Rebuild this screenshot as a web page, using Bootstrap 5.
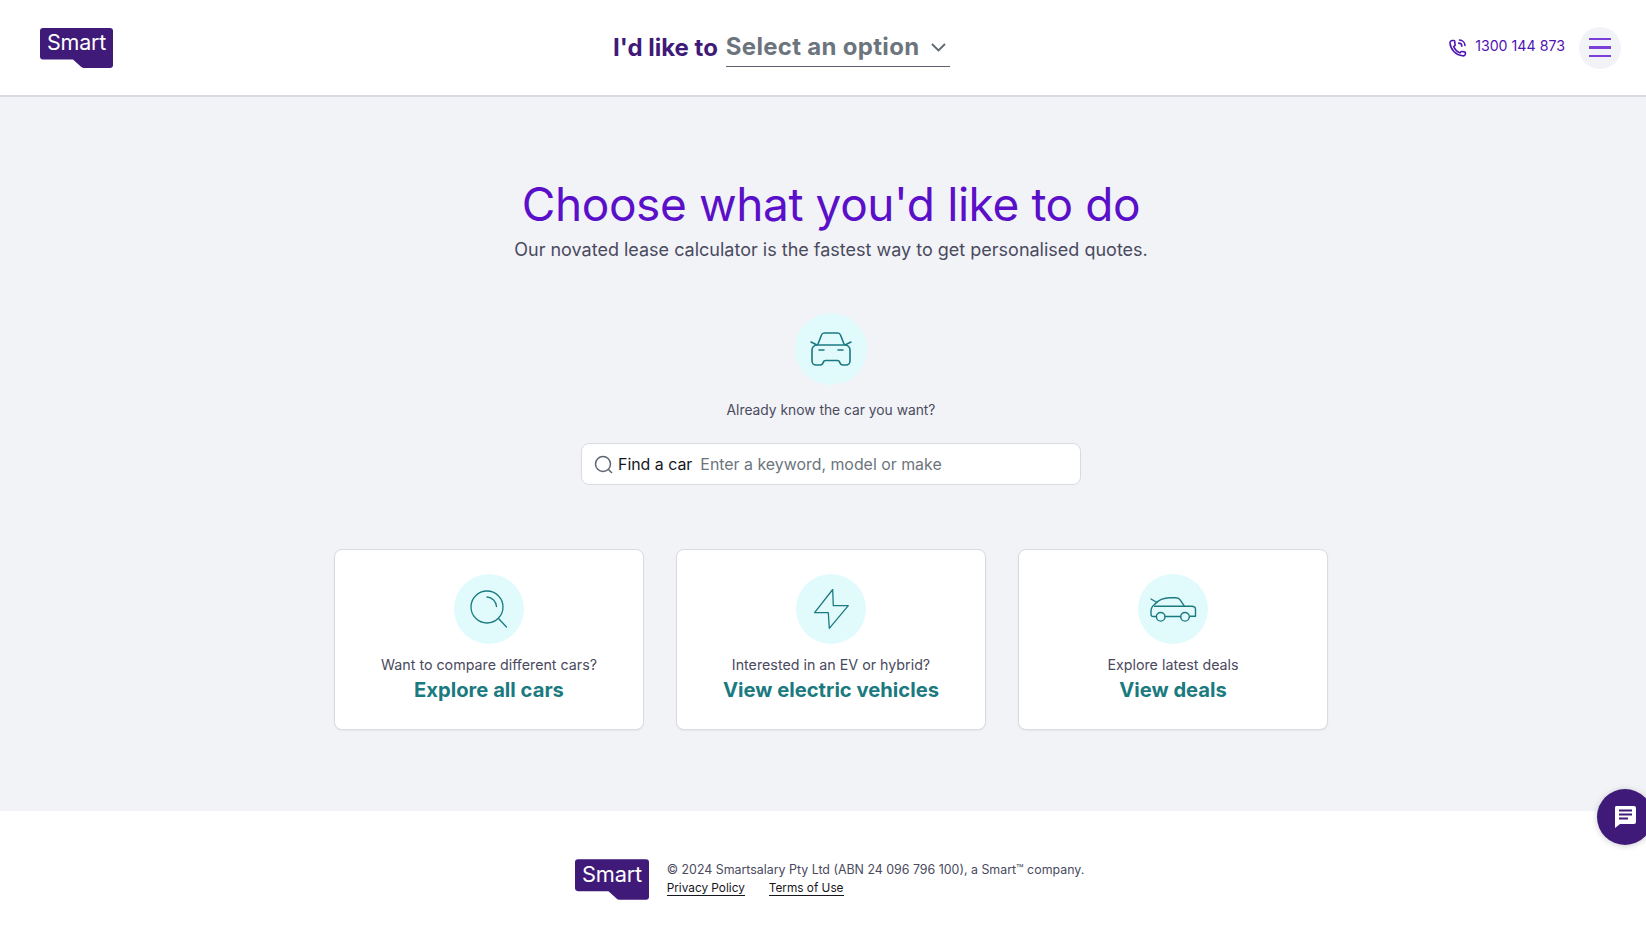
<!DOCTYPE html>
<html lang="en">
<head>
  <meta charset="UTF-8" />
  <meta name="viewport" content="width=device-width, initial-scale=1" />
  <title>Choose what you'd like to do</title>
  <link href="https://cdn.jsdelivr.net/npm/bootstrap@5.3.3/dist/css/bootstrap.min.css" rel="stylesheet" />
  <style>
    body {
      font-family: Inter, "Liberation Sans", sans-serif;
      color: #4a4a5e;
      background: #fff;
      overflow-x: hidden;
    }
    .topbar {
      height: 97px;
      padding: 0 25px 0 40px;
      background: #fff;
      border-bottom: 2px solid #d9dae2;
    }
    .topbar-left { flex: 0 0 573px; }
    .brand-logo { display: block; }
    .picker { width: 337px; font-size: 24px; font-weight: 700; }
    .picker-label { color: #3f1a78; margin-right: 8px; white-space: nowrap; }
    .picker-field { flex: 1; color: #6c757d; border-bottom: 1px solid #5f5f70; height: 39px; padding-right: 4px; white-space: nowrap; letter-spacing: .3px; }
    .phone-link { color: #4f14b5; font-size: 14.2px; text-decoration: none; margin-right: 14px; }
    .phone-num { margin-bottom: 3px; }
    .menu-btn { width: 42px; height: 42px; background: #f2f3f7; border: 0; padding: 0; gap: 6px; }
    .menu-bar { display: block; width: 22px; height: 2.5px; background: #7a3fd6; }
    .main-area { background: #f2f3f7; padding: 78px 0 80px 16px; height: 714px; }
    .main-title { color: #5a0fc8; font-size: 46px; font-weight: 400; line-height: 58px; margin: 0 0 3px; letter-spacing: -.4px; }
    .main-sub { font-size: 18px; line-height: 28px; margin: 0 0 49px; }
    .icon-round { width: 70px; height: 70px; background: #e1fbfd; }
    .icon-round.big { width: 72px; height: 72px; }
    .know-text { font-size: 13.8px; line-height: 22px; margin: 14px 0 22px; }
    .search-box { width: 500px; height: 42px; background: #fff; border: 1px solid #d9dae2; border-radius: 8px; padding: 0 12px; font-size: 15.9px; }
    .search-label { color: #16161e; margin: 2px 8px 0 5px; white-space: nowrap; }
    .search-input { color: #6c757d; border: 0; outline: 0; flex: 1; min-width: 0; padding: 2px 0 0; font: inherit; background: transparent; }
    .search-input::placeholder { color: #6c757d; opacity: 1; }
    .option-row { margin-top: 64px; gap: 32px; }
    .option-card { width: 310px; height: 181px; padding-top: 24px; border: 1px solid #d9dae2; border-radius: 8px; background: #fff; box-shadow: 0 1px 2px rgba(0,0,0,.05); }
    .option-text { font-size: 14.25px; line-height: 22px; margin: 10px 0 0; }
    .option-link { color: #1b7a80; font-size: 20.2px; font-weight: 700; line-height: 28px; text-decoration: none; }
    .foot-area { height: 137px; padding: 48px 0 0 13px; background: #fff; }
    .foot-text { font-size: 12.4px; line-height: 18px; margin-left: 18px; padding-top: 2px; }
    .foot-links { gap: 24px; margin-top: 2px; font-size: 11.8px; }
    .foot-links a { color: #16161e; text-decoration: none; border-bottom: 1px solid #16161e; line-height: 14px; }
    .chat-btn { position: fixed; right: -7px; top: 789px; width: 56px; height: 56px; background: #3f1a78; border: 0; box-shadow: 0 1px 6px rgba(0,0,0,.2); }
  </style>
</head>
<body>
  <header class="topbar d-flex align-items-center">
    <div class="topbar-left">
      <a href="#" class="brand-logo">
        <svg class="d-block" width="73" height="40" viewBox="0 0 73 40"><path d="M3 0H70a3 3 0 0 1 3 3V37a3 3 0 0 1-3 3H44a4 4 0 0 1-3-1.200L33 31.500H3a3 3 0 0 1-3-3V3a3 3 0 0 1 3-3Z" fill="#3f1a78"/><text x="36.500" y="22" fill="#fff" font-size="21.500" text-anchor="middle" font-family="Inter, sans-serif" letter-spacing="-.2">Smart</text></svg>
      </a>
    </div>
    <div class="picker d-flex align-items-center">
      <span class="picker-label">I'd like to</span>
      <div class="picker-field d-flex align-items-center justify-content-between">
        <span>Select an option</span>
        <svg width="15" height="9" viewBox="0 0 15 9" fill="none" stroke="#5f6672" stroke-width="1.800"><path d="M1 1l6.500 6.500L14 1"/></svg>
      </div>
    </div>
    <div class="ms-auto d-flex align-items-center">
      <a href="#" class="phone-link d-flex align-items-center gap-2">
        <svg width="19" height="19" viewBox="0 0 24 24" fill="none" stroke="#4f14b5" stroke-width="2" stroke-linecap="round" stroke-linejoin="round"><path d="M22 19.500v-.5a1.500 1.500 0 0 0-1.300-1.500l-3-.5a1.800 1.800 0 0 0-1.700.6l-1 1.200a15 15 0 0 1-7.800-7.800l1.200-1a1.800 1.800 0 0 0 .6-1.700l-.5-3A1.500 1.500 0 0 0 7 3.200H5.500A3 3 0 0 0 2.500 6.500 18 18 0 0 0 18.500 22.500a3 3 0 0 0 3.500-3Z"/><path d="M14.500 2.500a7.500 7.500 0 0 1 7 7"/><path d="M13.500 6.500a4 4 0 0 1 4 4"/></svg>
        <span class="phone-num">1300 144 873</span>
      </a>
      <button class="menu-btn rounded-circle d-flex flex-column align-items-center justify-content-center" aria-label="Menu">
        <span class="menu-bar"></span>
        <span class="menu-bar"></span>
        <span class="menu-bar"></span>
      </button>
    </div>
  </header>

  <main class="main-area d-flex flex-column align-items-center text-center">
    <h1 class="main-title">Choose what you'd like to do</h1>
    <p class="main-sub">Our novated lease calculator is the fastest way to get personalised quotes.</p>

    <div class="icon-round big rounded-circle d-flex align-items-center justify-content-center">
      <svg width="44" height="36" viewBox="0 0 44 36" fill="none" stroke="#1b7a80" stroke-width="1.600" stroke-linecap="round" stroke-linejoin="round"><path d="M9 13l3.500-9a3 3 0 0 1 3-2h13a3 3 0 0 1 3 2L35 13"/><path d="M2 11l6 3M42 11l-6 3"/><path d="M8 14H36a5 5 0 0 1 5 5v11a4 4 0 0 1-4 4h-3a3.500 3.500 0 0 1-3.200-2.500l-.3-.5a2 2 0 0 0-2-1.500H16.500a2 2 0 0 0-2 1.500l-.3.5A3.500 3.500 0 0 1 11 34H7a4 4 0 0 1-4-4V19a5 5 0 0 1 5-5Z"/><path d="M10 19h5M29 19h5"/></svg>
    </div>
    <p class="know-text">Already know the car you want?</p>
    <div class="search-box d-flex align-items-center">
      <svg width="19" height="19" viewBox="0 0 19 19" fill="none" stroke="#5f6672" stroke-width="1.500"><circle cx="9" cy="9" r="7.500"/><path d="M14.500 14.500L18 18"/></svg>
      <span class="search-label">Find a car</span>
      <input class="search-input" type="text" placeholder="Enter a keyword, model or make" />
    </div>

    <div class="option-row d-flex justify-content-center">
      <div class="option-card d-flex flex-column align-items-center">
        <div class="icon-round rounded-circle d-flex align-items-center justify-content-center">
          <svg width="38" height="38" viewBox="0 0 38 38" fill="none" stroke="#1b7a80" stroke-width="1.300" stroke-linecap="round"><circle cx="17" cy="17" r="16"/><path d="M17 7a10 10 0 0 1 9.500 9.500"/><path d="M28.500 28.500L36.500 37"/></svg>
        </div>
        <p class="option-text">Want to compare different cars?</p>
        <a href="#" class="option-link">Explore all cars</a>
      </div>
      <div class="option-card d-flex flex-column align-items-center">
        <div class="icon-round rounded-circle d-flex align-items-center justify-content-center">
          <svg width="35" height="40" viewBox="0 0 35 40" fill="none" stroke="#1b7a80" stroke-width="1.300" stroke-linejoin="round"><path d="M18.700.5L.6 23.700H14.300L15.300 39.300L34.300 16.700H19.300Z"/></svg>
        </div>
        <p class="option-text">Interested in an EV or hybrid?</p>
        <a href="#" class="option-link">View electric vehicles</a>
      </div>
      <div class="option-card d-flex flex-column align-items-center">
        <div class="icon-round rounded-circle d-flex align-items-center justify-content-center">
          <svg width="47" height="25" viewBox="0 0 47 25" fill="none" stroke="#1b7a80" stroke-width="1.400" stroke-linecap="round" stroke-linejoin="round"><path d="M1 2l6 3.500"/><path d="M6.500 19.500H3a2 2 0 0 1-2-2V14c0-3 1.500-5 3.500-6.500C8 3.500 13 .8 20 .8h6c2 0 3.500.8 4.500 2.500l4 6h7c3 0 4 1.500 4 3v7h-5M30.700 19.500H15"/><path d="M4.500 9.300h30"/><circle cx="10.700" cy="19.800" r="4.300"/><circle cx="35" cy="19.800" r="4.300"/></svg>
        </div>
        <p class="option-text">Explore latest deals</p>
        <a href="#" class="option-link">View deals</a>
      </div>
    </div>
  </main>

  <footer class="foot-area d-flex justify-content-center align-items-start">
    <svg width="74" height="41" viewBox="0 0 73 40"><path d="M3 0H70a3 3 0 0 1 3 3V37a3 3 0 0 1-3 3H44a4 4 0 0 1-3-1.200L33 31.500H3a3 3 0 0 1-3-3V3a3 3 0 0 1 3-3Z" fill="#3f1a78"/><text x="36.500" y="22" fill="#fff" font-size="21.500" text-anchor="middle" font-family="Inter, sans-serif" letter-spacing="-.2">Smart</text></svg>
    <div class="foot-text">
      <div>© 2024 Smartsalary Pty Ltd (ABN 24 096 796 100), a Smart™ company.</div>
      <div class="foot-links d-flex"><a href="#">Privacy Policy</a><a href="#">Terms of Use</a></div>
    </div>
  </footer>

  <button class="chat-btn rounded-circle d-flex align-items-center justify-content-center" aria-label="Chat">
    <svg width="24" height="24" viewBox="0 0 24 24"><path d="M3 1H21a2 2 0 0 1 2 2V17a2 2 0 0 1-2 2H7L2 23V3a2 2 0 0 1 1-2Z" fill="#fff"/><path d="M6 5.500H19M6 9.500H19M6 13.500H15" stroke="#3f1a78" stroke-width="2"/></svg>
  </button>

  <script src="https://cdn.jsdelivr.net/npm/bootstrap@5.3.3/dist/js/bootstrap.bundle.min.js"></script>
</body>
</html>
